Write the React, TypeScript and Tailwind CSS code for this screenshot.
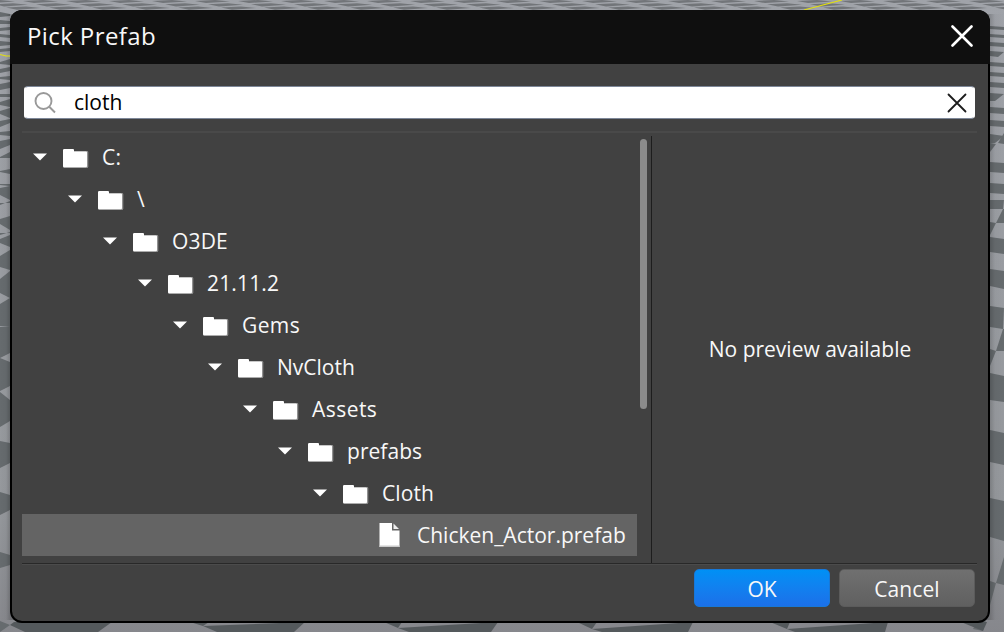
import React from "react";

const folders = [
  { name: "C:", tracking: "tracking-[0.3px]" },
  { name: "\\", tracking: "" },
  { name: "O3DE", tracking: "tracking-[0.15px]" },
  { name: "21.11.2", tracking: "tracking-[0.15px]" },
  { name: "Gems", tracking: "tracking-[0.4px]" },
  { name: "NvCloth", tracking: "" },
  { name: "Assets", tracking: "tracking-[0.45px]" },
  { name: "prefabs", tracking: "tracking-[0.05px]" },
  { name: "Cloth", tracking: "tracking-[0.1px]" },
];

const leftTiles = [
  "0,12 10,14 10,16 0,17", "0,20 10,21 10,24 0,24", "0,28 10,27 10,30 0,31", "0,34 10,35 10,38 0,37",
  "0,41 10,42 10,45 0,46", "0,49 10,48 10,51 0,52", "0,62 10,59 10,65 0,64", "0,69 10,67 10,71 0,73",
  "0,77 10,76 10,80 0,79", "0,84 10,82 10,88 0,90", "0,94 10,94 10,97 0,97", "0,102 10,99 10,107 0,105",
  "0,111 10,108 10,118 0,114", "0,121 10,119 10,123 0,127", "0,132 10,131 10,136 0,135",
  "0,141 10,139 10,145 0,149", "0,157 10,152 10,158 0,158", "0,171 10,169 10,174 0,172",
  "0,184 10,184 10,186 0,185", "0,188 10,186 10,200 0,195", "0,205 10,201 10,203 0,203",
  "0,219 10,216 10,230 0,224", "0,235 10,232 10,233 0,233", "0,239 10,235 10,247 0,243",
  "0,256 10,250 10,270 0,267", "0,279 10,271 10,298 0,293", "0,304 10,298 10,326 0,326",
  "0,327 10,326 10,353 0,358", "0,358 10,362 10,386 0,391", "0,392 10,400 10,421 0,427",
  "0,441 10,443 10,463 0,468", "0,492 10,495 10,510 0,515", "0,552 10,555 10,565 0,568",
  "0,621 10,625 0,632",
];

const rightTiles = [
  "990,26 1004,27 1004,30 990,29", "990,34 1004,35 1004,38 990,37", "990,42 1004,43 1004,47 990,46",
  "990,51 1004,52 998,57 990,56", "990,62 1004,63 1004,67 990,66", "990,72 1004,73 1004,77 990,76",
  "990,82 1004,83 1004,88 990,87", "990,93 1004,94 995,101 990,101", "990,107 1004,108 1004,114 990,113",
  "990,120 1004,121 1004,127 990,126", "990,134 1004,136 995,143 990,143", "998,143 1004,133 1004,144",
  "990,143 996,144 990,152", "990,162 1004,163 1004,173 990,172", "990,183 1004,184 1004,194 990,193",
  "990,200 1004,200 1003,209 990,209", "1003,209 1004,209 1004,223 996,223", "990,222 996,223 990,235",
  "990,237 1004,239 1004,254 990,252", "990,269 1004,271 1004,289 990,286", "990,306 1004,308 1003,329 990,327",
  "1003,329 1004,329 1004,351 996,351", "990,349 996,351 990,366", "990,373 1004,376 1004,402 990,400",
  "990,430 1004,433 1004,465 990,462", "990,498 1004,501 1004,541 990,537", "1004,557 1004,585 996,583",
  "990,581 996,583 983,631 973,629 990,600",
];

const bottomTiles = [
  "10,625 14,622 112,622 98,632 25,632",
  "190,622 209,622 203,626", "203,626 305,622 294,632 217,632",
  "384,622 402,622 398,628", "398,628 498,622 491,632 409,632",
  "577,622 597,622 592,629", "592,629 693,622 688,632 602,632",
  "770,622 790,622 787,629", "787,629 888,622 885,632 795,632",
  "961,622 987,622 983,631",
];

const topTiles = Array.from({ length: 72 }, (_, i) => {
  const row = i % 3;
  const x = Math.floor(i / 3) * 43 + row * 13 - 20;
  const y = row * 3.3;
  return `${x},${y + 0.9} ${x + 20},${y} ${x + 35},${y + 1.4} ${x + 11},${y + 3.1}`;
});

function Floor() {
  return (
    <svg className="absolute inset-0" width="1004" height="632">
      <defs>
        <linearGradient id="lightTile" x1="0" y1="0" x2="0" y2="1">
          <stop offset="0" stopColor="#a0a3a9" />
          <stop offset="0.8" stopColor="#95989c" />
          <stop offset="1" stopColor="#86878c" />
        </linearGradient>
        <linearGradient id="edgeShade" x1="0" y1="0" x2="1" y2="0">
          <stop offset="0" stopColor="#000" stopOpacity="0" />
          <stop offset="0.006" stopColor="#000" stopOpacity="0.03" />
          <stop offset="0.0105" stopColor="#000" stopOpacity="0.2" />
          <stop offset="0.985" stopColor="#000" stopOpacity="0.2" />
          <stop offset="0.991" stopColor="#000" stopOpacity="0.03" />
          <stop offset="1" stopColor="#000" stopOpacity="0" />
        </linearGradient>
      </defs>
      <rect width="1004" height="632" fill="url(#lightTile)" />
      {topTiles.map((p, i) => <polygon key={i} points={p} fill="#727579" />)}
      {leftTiles.map((p) => <polygon key={p} points={p} fill="#666b6e" />)}
      {rightTiles.map((p) => <polygon key={p} points={p} fill="#666b6e" />)}
      {bottomTiles.map((p) => <polygon key={p} points={p} fill="#54595c" />)}
      <rect y="14" width="1004" height="606" fill="url(#edgeShade)" />
      <path d="M804 10 842 0M0 54.500 6 56h4" stroke="#e2df10" strokeWidth="1.200" fill="none" />
    </svg>
  );
}

function FolderIcon() {
  return (
    <svg className="mt-[3px] ml-[16px] shrink-0" width="26" height="22" viewBox="0 0 26 22">
      <path d="M2 3h22a1.300 1.300 0 0 1 1.300 1.300V18.500a1.500 1.500 0 0 1-1.500 1.500H1.500A1.500 1.500 0 0 1 0 18.500V4.500z" fill="#919191" />
      <path d="M1.200 1H10a1 1 0 0 1 1 1V3.500H23a1 1 0 0 1 1 1V18a1.200 1.200 0 0 1-1.200 1.200H1.200A1.200 1.200 0 0 1 0 18V2.200A1.200 1.200 0 0 1 1.200 1z" fill="#fff" />
    </svg>
  );
}

function Cross({ size, width }: { size: number; width: number }) {
  return (
    <svg width={size} height={size} viewBox={`0 0 ${size} ${size}`} stroke="currentColor" strokeWidth={width} strokeLinecap="round">
      <path d={`M1.500 1.500 ${size - 1.5} ${size - 1.5}M${size - 1.5} 1.500 1.500 ${size - 1.5}`} />
    </svg>
  );
}

export default function App() {
  return (
    <div className="relative h-[632px] w-[1004px] overflow-hidden bg-[#96999d] p-[10px] font-['Open_Sans',sans-serif]">
      <Floor />
      <div className="relative flex h-[613px] w-[980px] flex-col overflow-hidden rounded-xl bg-black text-[#f8f8f8]">
        <header className="flex h-[54px] shrink-0 items-center justify-between bg-[#0f0f0f] px-[17px] pb-[2px] text-2xl">
          <h1 className="-mt-px tracking-[0.4px]">Pick Prefab</h1>
          <button className="-mt-px text-white" aria-label="Close"><Cross size={22} width={2.6} /></button>
        </header>
        <main className="mx-[2px] mb-[2px] flex flex-1 flex-col rounded-b-[10px] bg-[#414141] px-[10px] text-[21px]">
          <label className="mt-[22px] mr-[3px] ml-[2px] flex h-[33px] shrink-0 items-center rounded-[4px] border border-x-white border-y-[#7d8798] bg-white pr-[7px] pl-[9px] text-black">
            <svg width="22" height="22" viewBox="0 0 22 22" fill="none" stroke="#999" strokeWidth="1.900">
              <circle cx="9.500" cy="9" r="8" />
              <path d="m15 14.500 6 6" />
            </svg>
            <span className="ml-[18px] flex-1">cloth</span>
            <span className="text-[#1c1c1c]"><Cross size={20} width={1.8} /></span>
          </label>
          <div className="mt-3 mr-[1px] h-[2px] shrink-0 bg-[#494949]" />
          <section className="mt-[3px] mr-[1px] flex h-[427px] shrink-0">
            <div className="w-[615px]">
              {folders.map(({ name, tracking }, i) => (
                <div key={name} className="flex h-[42px] items-center" style={{ paddingLeft: 11 + i * 35 }}>
                  <svg className="shrink-0" width="14" height="8" viewBox="0 0 14 8"><path d="M0 .5h14l-7 7z" fill="#fff" /></svg>
                  <FolderIcon />
                  <span className={`mt-[2px] ml-[13px] ${tracking}`}>{name}</span>
                </div>
              ))}
              <div className="flex h-[42px] items-center bg-[#646464] pl-[357px]">
                <svg className="shrink-0" width="21" height="24" viewBox="0 0 21 24">
                  <path d="M.5 0H13v7.500h7.500V24H.5z" fill="#fff" />
                  <path d="M.5 22.500h20V24H.5z" fill="#cacaca" />
                  <path d="M14.500.5v5.500h5.500z" fill="#eee" />
                </svg>
                <span className="mt-[2px] ml-[17px]">Chicken_Actor.prefab</span>
              </div>
            </div>
            <div className="mt-[3px] ml-[3px] h-[270px] w-[7px] rounded-full bg-[#8b8b8b]" />
            <div className="ml-[4px] w-px bg-[#1d1d1d]" />
            <div className="flex flex-1 items-center justify-center pr-[9px]">No preview available</div>
          </section>
          <div className="mr-[1px] h-[2px] shrink-0 border-t border-[#282828] bg-[#4b4b4b]" />
          <footer className="mt-[4px] mr-[3px] flex justify-end gap-[9px]">
            <button className="h-[38px] w-[136px] rounded-[5px] border border-[#1878d8] bg-linear-to-b from-[#0090f5] to-[#1b70e9] pt-[4px]">OK</button>
            <button className="h-[38px] w-[136px] rounded-[5px] border border-[#5b5b5b] bg-linear-to-b from-[#707070] to-[#606060] pt-[4px] tracking-[0.1px]">Cancel</button>
          </footer>
        </main>
      </div>
    </div>
  );
}
